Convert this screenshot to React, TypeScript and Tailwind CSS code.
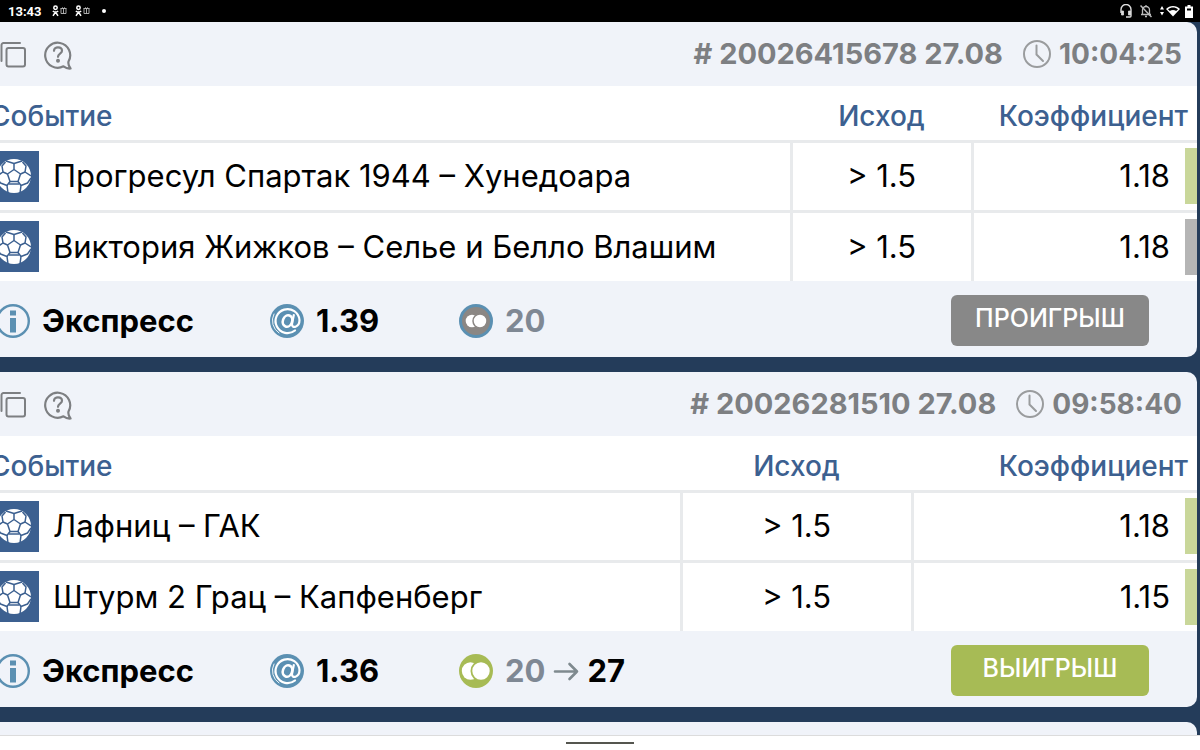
type Leg = { event: string; outcome: string; odds: string; won: boolean };

type Bet = {
  id: string;
  date: string;
  time: string;
  legs: Leg[];
  odds: string;
  stake: string;
  payout?: string;
  outcomeCol: string;
  oddsCol: string;
};

const BETS: Bet[] = [
  {
    id: "20026415678",
    date: "27.08",
    time: "10:04:25",
    legs: [
      { event: "Прогресул Спартак 1944 – Хунедоара", outcome: "> 1.5", odds: "1.18", won: true },
      { event: "Виктория Жижков – Селье и Белло Влашим", outcome: "> 1.5", odds: "1.18", won: false },
    ],
    odds: "1.39",
    stake: "20",
    outcomeCol: "w-[181px]",
    oddsCol: "w-[225px]",
  },
  {
    id: "20026281510",
    date: "27.08",
    time: "09:58:40",
    legs: [
      { event: "Лафниц – ГАК", outcome: "> 1.5", odds: "1.18", won: true },
      { event: "Штурм 2 Грац – Капфенберг", outcome: "> 1.5", odds: "1.15", won: true },
    ],
    odds: "1.36",
    stake: "20",
    payout: "27",
    outcomeCol: "w-[231px]",
    oddsCol: "w-[285px]",
  },
];

function CopyIcon() {
  return (
    <svg width="28" height="28" viewBox="0 0 28 28" fill="none" stroke="#7d7f82" strokeWidth="2" strokeLinecap="round" strokeLinejoin="round">
      <rect x="6.500" y="7" width="18.500" height="18.500" rx="2" />
      <path d="M1.500 20V4a2 2 0 0 1 2-2h16.500" />
    </svg>
  );
}

function HelpIcon() {
  return (
    <svg width="28" height="30" viewBox="0 0 28 30" fill="none" stroke="#7d7f82" strokeWidth="2.200" strokeLinecap="round" strokeLinejoin="round">
      <path d="M19.500 26.300A12.500 12.500 0 1 1 24.500 21.500C24 24 25 26.500 26.500 28.500C24 28.800 21.500 27.800 19.500 26.300Z" />
      <path d="M10 10.800C10 6.200 18 6.400 18 10.800C18 13.800 14 13.600 14 16.800" />
      <circle cx="14" cy="20.800" r="0.900" fill="#7d7f82" />
    </svg>
  );
}

function ClockIcon() {
  return (
    <svg width="28" height="28" viewBox="0 0 28 28" fill="none" stroke="#9a9c9e" strokeWidth="2" strokeLinecap="round">
      <circle cx="14" cy="14" r="13" />
      <path d="M13.500 5.500V14.500L20 21" />
    </svg>
  );
}

function BallIcon() {
  return (
    <svg width="34" height="34" viewBox="0 0 34 34">
      <circle cx="17" cy="17" r="17" fill="#fff" />
      <g fill="none" stroke="#3c6090" strokeWidth="1.500" strokeLinejoin="round">
        <path d="M17 10.500L23.500 15L21 22.500H13L10.500 15Z" />
        <path d="M17 10.500V4.500M23.500 15L28 13M21 22.500L24 26.500M13 22.500L10 26.500M10.500 15L6 13" />
        <path d="M9 2L17 4.500L25 2M25.500 3L29 7L28 13L34 17M34 19L30.500 24L24 26.500L23 34M11 34L10 26.500L3.500 24L0 19M0 17L6 13L5 7L8.500 3" />
        <path d="M12 25H22" />
      </g>
    </svg>
  );
}

function InfoIcon() {
  return (
    <svg width="34" height="34" viewBox="0 0 34 34">
      <circle cx="17" cy="17" r="15.800" fill="none" stroke="#5b90b2" strokeWidth="2.400" />
      <path d="M14 6.500h6v5h-6zM14 14h6v14.500h-6z" fill="#5b90b2" />
    </svg>
  );
}

function OddsIcon() {
  return (
    <svg width="34" height="34" viewBox="0 0 34 34">
      <circle cx="17" cy="17" r="17" fill="#5b90b2" />
      <g fill="none" stroke="#fff" strokeLinecap="round">
        <path d="M25 26.500A12 12 0 1 1 29.500 16C29.500 23.500 21.500 25 22 20L23.800 11" strokeWidth="2.200" />
        <ellipse cx="17.500" cy="17" rx="4.600" ry="5.800" transform="rotate(20 17.500 17)" strokeWidth="2.600" />
        <path d="M9 29A14.500 14.500 0 0 1 4 10" strokeWidth="0.900" />
      </g>
    </svg>
  );
}

function StakeIcon({ won }: { won: boolean }) {
  if (won) {
    return (
      <svg width="34" height="34" viewBox="0 0 34 34">
        <circle cx="17" cy="17" r="17" fill="#a7bb55" />
        <circle cx="11.500" cy="17" r="8.700" fill="#fff" />
        <circle cx="22" cy="17" r="9.600" fill="#fff" stroke="#a7bb55" strokeWidth="1.800" />
      </svg>
    );
  }
  return (
    <svg width="34" height="34" viewBox="0 0 34 34">
      <circle cx="17" cy="17" r="15.500" fill="#8b8784" stroke="#5b90b2" strokeWidth="3" />
      <circle cx="13" cy="17" r="6.300" fill="#fff" />
      <circle cx="21" cy="17" r="7" fill="#fff" stroke="#8b8784" strokeWidth="1.500" />
    </svg>
  );
}

function PayoutArrow() {
  return (
    <svg width="26" height="20" viewBox="0 0 26 20" fill="none" stroke="#7f8a8f" strokeWidth="2.600" strokeLinecap="round" strokeLinejoin="round">
      <path d="M2 10.500H24M16.500 3L24 10.500L16.500 18" />
    </svg>
  );
}

function PersonGift() {
  return (
    <svg width="15" height="12" viewBox="0 0 15 12" fill="none" stroke="#fff">
      <circle cx="3.500" cy="2.800" r="1.700" strokeWidth="1.500" />
      <path d="M0.800 6C2.500 7.300 4.500 7.300 6.200 6M3.500 7L1 10.800M3.500 7L6 10.800" strokeWidth="1.500" />
      <path d="M8.500 3.500h6M9 3.500v5h5v-5M11.500 3v5.500M10 2.500l1.500 1l1.500-1" strokeWidth="0.900" stroke="#bbb" />
    </svg>
  );
}

function HeadsetIcon() {
  return (
    <svg width="12" height="14" viewBox="0 0 12 14" fill="none" stroke="#ddd" strokeWidth="1.400">
      <path d="M1 9V5.500a5 5 0 0 1 10 0V12a1 1 0 0 1-1 1H6" />
      <path d="M1.500 7h2v4h-2zM8.500 7h2v4h-2z" fill="#ddd" strokeWidth="0.800" />
    </svg>
  );
}

function MutedBellIcon() {
  return (
    <svg width="12" height="14" viewBox="0 0 12 14" fill="none" stroke="#bbb" strokeWidth="1.300">
      <path d="M2.500 10.500V6a3.500 3.500 0 0 1 7 0v4.500M1 10.500h10M6 1v1.500M5 12.500h2" />
      <path d="M0.500 1.500l11 11.500" strokeWidth="1.500" />
    </svg>
  );
}

function StatusBar() {
  return (
    <header className="flex h-[22px] shrink-0 items-center justify-between bg-black pl-2 pr-[7px] font-[Roboto,sans-serif] text-white">
      <div className="flex items-center gap-2">
        <span className="mr-[2px] text-[13px] font-bold leading-none">13:43</span>
        <PersonGift />
        <PersonGift />
        <span className="ml-1 size-1 rounded-full bg-white" />
      </div>
      <div className="flex items-center gap-2">
        <HeadsetIcon />
        <MutedBellIcon />
        <div className="flex items-center gap-[5px]">
          <svg width="20" height="12" viewBox="0 0 20 12" fill="#fff">
            <path d="M2 1l2 3.500H0zM2 10.500L0 7h4z" />
            <path d="M6 4C9.500 0 16.500 0 20 4L13 11.500Z" />
            <path d="M8 4.200C11 2 15 2 18 4.200L16.200 6C14 4.500 12 4.500 9.800 6Z" fill="#000" />
          </svg>
          <svg width="8" height="13" viewBox="0 0 8 13">
            <path d="M2.500 0h3v1.500H8V13H0V1.500h2.500z" fill="#fff" />
            <path d="M2 3.500h4v2H2z" fill="#000" />
          </svg>
        </div>
      </div>
    </header>
  );
}

function BetCard({ bet }: { bet: Bet }) {
  const won = bet.payout !== undefined;
  return (
    <article className="shrink-0 overflow-hidden rounded-[10px] bg-[#f0f3f9]">
      <div className="flex h-16 items-center justify-between pl-3 pr-[15px] text-[#7d7f82]">
        <div className="flex items-center gap-4 pt-[2px]">
          <button type="button" aria-label="Копировать">
            <CopyIcon />
          </button>
          <button type="button" aria-label="Помощь">
            <HelpIcon />
          </button>
        </div>
        <div className="flex items-center gap-2 text-[28px] font-bold leading-8">
          <span className="mr-3 text-[29px]">
            # {bet.id} {bet.date}
          </span>
          <ClockIcon />
          <time>{bet.time}</time>
        </div>
      </div>

      <table className="w-full table-fixed border-collapse bg-white text-[31px] leading-9 text-black">
        <thead>
          <tr className="h-[55px] text-[28px] text-[#3c6090]">
            <th className="p-0 pl-[2px] pt-[6px] text-left font-medium">Событие</th>
            <th className={`p-0 pt-[6px] text-center font-medium ${bet.outcomeCol}`}>Исход</th>
            <th className={`p-0 pr-[9px] pt-[6px] text-right font-medium ${bet.oddsCol}`}>Коэффициент</th>
          </tr>
        </thead>
        <tbody>
          {bet.legs.map((leg) => (
            <tr key={leg.event} className="h-[70px] border-t-[3px] border-[#e8eaec]">
              <td className="p-0">
                <div className="flex items-center gap-[14px]">
                  <span className="flex size-[51px] shrink-0 items-center justify-center bg-[#3c6090]">
                    <BallIcon />
                  </span>
                  {leg.event}
                </div>
              </td>
              <td className="border-l-[3px] border-[#e8eaec] p-0 text-center">{leg.outcome}</td>
              <td className="border-l-[3px] border-[#e8eaec] p-0">
                <div className="flex items-center justify-end gap-[15px]">
                  {leg.odds}
                  <span className={leg.won ? "h-14 w-3 bg-[#c9d79a]" : "h-14 w-3 bg-[#b5b5b5]"} />
                </div>
              </td>
            </tr>
          ))}
        </tbody>
      </table>

      <div className="flex h-[76px] items-center justify-between pl-2 pr-12 pt-[3px] text-[31px] font-bold leading-9">
        <div className="flex items-center">
          <div className="flex w-[274px] items-center gap-3">
            <InfoIcon />
            <span>Экспресс</span>
          </div>
          <div className="flex w-[189px] items-center gap-3">
            <OddsIcon />
            <span>{bet.odds}</span>
          </div>
          <div className="flex items-center gap-3">
            <StakeIcon won={won} />
            <div className="flex items-center gap-2">
              <span className="text-[#7f8894]">{bet.stake}</span>
              {won && (
                <>
                  <PayoutArrow />
                  <span>{bet.payout}</span>
                </>
              )}
            </div>
          </div>
        </div>
        <button
          type="button"
          className={`w-[198px] rounded-md pb-3 pt-[7px] text-[25px] font-medium leading-8 text-white ${won ? "bg-[#a7bb55]" : "bg-[#888888]"}`}
        >
          {won ? "ВЫИГРЫШ" : "ПРОИГРЫШ"}
        </button>
      </div>
    </article>
  );
}

export default function App() {
  return (
    <div className="flex h-screen flex-col overflow-hidden bg-[#243c5a] font-[Inter,sans-serif]">
      <StatusBar />
      <main className="-ml-3 mr-[3px] flex min-h-0 flex-1 flex-col gap-[15px] overflow-hidden">
        {BETS.map((bet) => (
          <BetCard key={bet.id} bet={bet} />
        ))}
        <div className="h-16 shrink-0 rounded-[10px] bg-[#f0f3f9]" />
      </main>
      <footer className="flex h-[15px] shrink-0 justify-center border-t border-[#dcdcdc] bg-white pt-[6px]">
        <span className="h-[2px] w-[68px] bg-[#55564f]" />
      </footer>
    </div>
  );
}
